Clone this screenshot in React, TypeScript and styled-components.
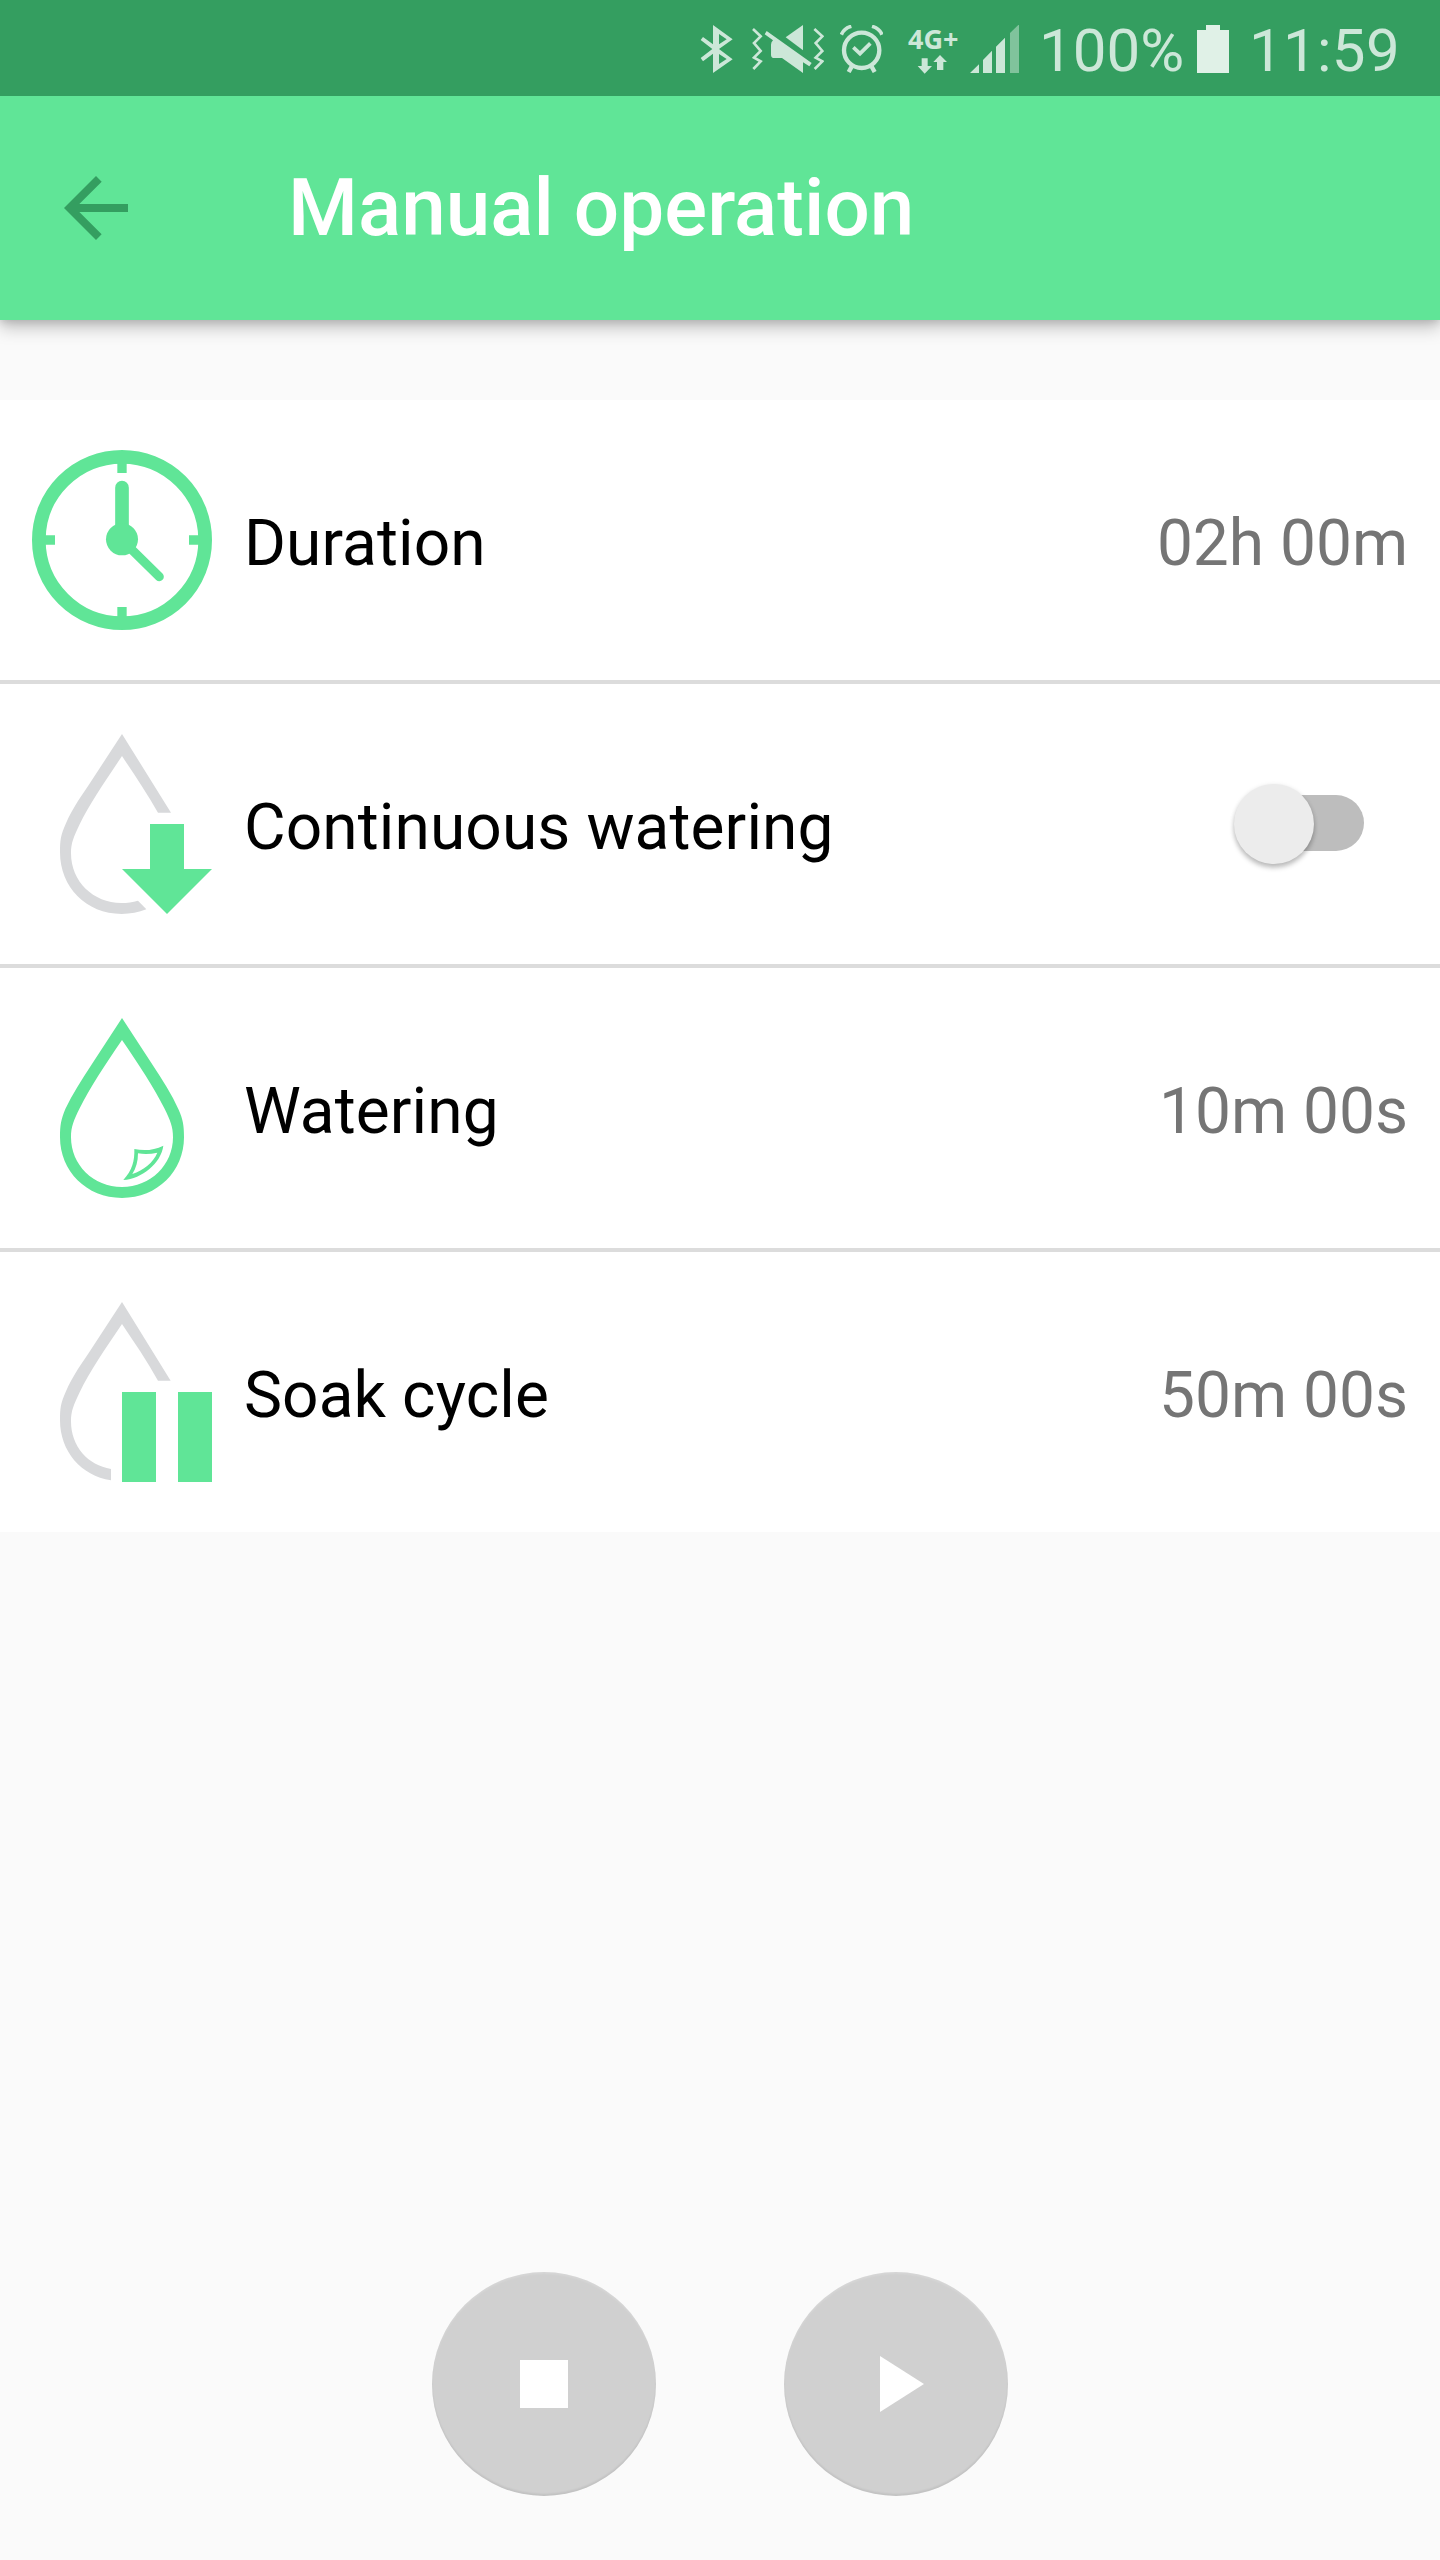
import React from "react";
import styled, { createGlobalStyle } from "styled-components";

const GREEN = "#60e597";
const DARK = "#349e60";
const PALE = "#cce7d8";
const GREY = "#d8d9db";

const GlobalStyle = createGlobalStyle`
  body { margin: 0; background: #fafafa; }
  * { box-sizing: border-box; }
  svg { display: block; flex: none; }
`;

const Screen = styled.div`
  width: 1440px;
  height: 2560px;
  display: flex;
  flex-direction: column;
  background: #fafafa;
  font-family: Roboto, sans-serif;
  overflow: hidden;
`;

const StatusBar = styled.div`
  height: 96px;
  flex: none;
  z-index: 1;
  display: flex;
  padding-left: 700px;
  background: ${DARK};
  color: ${PALE};
`;

const StatusIcon = styled.svg<{ $gap?: number }>`
  height: 48px;
  margin-top: 25px;
  margin-right: ${(p) => p.$gap ?? 0}px;
`;

const StatusText = styled.span<{ $width: number; $tracking?: number }>`
  width: ${(p) => p.$width}px;
  flex: none;
  font-size: 60px;
  line-height: 70px;
  letter-spacing: ${(p) => p.$tracking ?? 0}px;
  margin-top: 16px;
  white-space: nowrap;
`;

const Network = styled.div`
  width: 62px;
  flex: none;
  display: flex;
  flex-direction: column;
  padding-top: 25px;
`;

const NetworkLabel = styled.span`
  height: 30px;
  font: 700 27px/27px "Noto Sans", sans-serif;
  white-space: nowrap;
`;

const AppBar = styled.header`
  height: 224px;
  flex: none;
  display: flex;
  align-items: center;
  padding-left: 48px;
  background: ${GREEN};
  box-shadow: 0 8px 16px rgba(0, 0, 0, 0.22), 0 2px 8px rgba(0, 0, 0, 0.14);
`;

const Title = styled.h1`
  margin: 0 0 0 144px;
  font-size: 80px;
  line-height: 94px;
  letter-spacing: 0.05px;
  font-weight: 500;
  color: #fff;
  white-space: nowrap;
`;

const List = styled.main`
  margin-top: 80px;
  background: #fff;
`;

const Row = styled.div`
  height: 280px;
  display: flex;
  align-items: center;
  padding: 0 32px;

  & + & {
    height: 284px;
    border-top: 4px solid #dcdcdc;
  }
`;

const Label = styled.span`
  flex: 1;
  margin: 8px 0 0 32px;
  font-size: 64px;
  line-height: 76px;
  letter-spacing: 0.1px;
  color: #000;
`;

const Value = styled.span`
  margin-top: 8px;
  font-size: 64px;
  line-height: 76px;
  color: #757575;
`;

const Track = styled.div`
  width: 112px;
  height: 56px;
  margin: 0 44px 2px 0;
  display: flex;
  align-items: center;
  border-radius: 28px;
  background: #bdbdbd;
`;

const Thumb = styled.div`
  width: 80px;
  height: 80px;
  flex: none;
  margin: 2px 0 0 -18px;
  border-radius: 50%;
  background: #ececec;
  box-shadow: 0 4px 5px rgba(0, 0, 0, 0.22), 0 1px 5px rgba(0, 0, 0, 0.1);
`;

const Controls = styled.footer`
  margin-top: auto;
  padding-bottom: 64px;
  display: flex;
  justify-content: center;
  gap: 128px;
`;

const RoundButton = styled.button`
  width: 224px;
  height: 224px;
  padding: 0;
  border: 0;
  border-radius: 50%;
  background: #d0d0d0;
  box-shadow: inset 0 -2px 2px rgba(0, 0, 0, 0.07), inset 0 2px 2px rgba(255, 255, 255, 0.14);
`;

const ClockIcon = () => (
  <svg width="180" height="180" viewBox="0 0 540 540" fill="none" stroke={GREEN}>
    <circle cx="270" cy="270" r="249.5" strokeWidth="41" />
    <path d="M270 38V69M270 471V502M38 270H69M471 270H502" strokeWidth="28" />
    <path d="M270 270V113" strokeWidth="41" strokeLinecap="round" />
    <path d="M270 270L382 380" strokeWidth="27" strokeLinecap="round" />
    <circle cx="270" cy="268" r="48" fill={GREEN} stroke="none" />
  </svg>
);

const DropArrowIcon = () => (
  <svg width="180" height="180" viewBox="0 -3 540 540">
    <path
      fill={GREY}
      d="M270 -3L417 233H378C345 174 306 118 270 63C220 138 172 208 143 268C125 306 117 324 117 355C117 440 184 504 268 504C286 504 302 501 318 497L343 523C320 532 295 537 269 537C162 537 84 456 84 352C84 315 86 301 101 267C123 216 152 178 178 138Z"
    />
    <path fill={GREEN} d="M354 267H456V402H540L405 537L270 402H354Z" />
  </svg>
);

const DropIcon = () => (
  <svg width="180" height="180" viewBox="0 -3 540 540" fill={GREEN}>
    <path
      fillRule="evenodd"
      d="M270 -3L362 138C392 184 419 226 440 272C453 302 456 318 456 355C456 456 377 537 270 537C163 537 84 456 84 355C84 318 87 302 100 270C121 226 148 184 178 138ZM270 63C220 136 175 204 143 268C125 305 117 324 117 355C117 438 184 504 270 504C356 504 423 438 423 355C423 324 415 305 397 268C365 204 320 136 270 63Z"
    />
    <path
      fillRule="evenodd"
      d="M307 390C336 396 366 394 394 380C387 433 330 479 274 483C301 454 308 425 307 390ZM318 403C318 428 312 448 301 465C335 454 363 431 376 401C357 405 338 406 318 403Z"
    />
  </svg>
);

const DropPauseIcon = () => (
  <svg width="180" height="180" viewBox="0 0 540 540">
    <path
      fill={GREY}
      d="M270 0L416 236H378C345 176 306 120 270 66C220 140 172 210 143 271C125 309 117 327 117 358C117 434 168 490 237 501V535C147 522 84 447 84 355C84 318 86 304 101 270C123 219 152 181 178 141Z"
    />
    <path fill={GREEN} d="M270 270H372V540H270ZM438 270H540V540H438Z" />
  </svg>
);

const App = () => (
  <>
    <GlobalStyle />
    <Screen>
      <StatusBar>
        <StatusIcon $gap={18} width="34" viewBox="60 75 102 144" fill={PALE}>
          <path
            fillRule="evenodd"
            d="M99 75L158 118L117 147L158 178L99 219V161L69 184L62 174L97 147L62 120L69 111L99 133ZM117 102V133L140 118ZM117 162V192L140 177Z"
          />
        </StatusIcon>
        <StatusIcon $gap={16} width="72" viewBox="216 75 216 144" fill={PALE}>
          <path
            d="M219 87L242 109L222 129L242 153L222 173L242 184L220 207M403 87L427 109L407 129L427 153L407 173L427 184L404 207"
            fill="none"
            stroke={PALE}
            strokeWidth="8"
          />
          <path d="M369 75V151L317 112Z" />
          <path d="M260 93L395 189L388 199L369 187V219L306 174H283Q273 174 273 164V134Q273 126 279 121L254 103Z" />
        </StatusIcon>
        <StatusIcon $gap={25} width="43" viewBox="480 75 129 144" fill="none" stroke={PALE}>
          <circle cx="545" cy="151" r="53" strokeWidth="13" />
          <path d="M520 142L540 161L571 130" strokeWidth="11" />
          <path d="M484 104Q492 85 514 79M606 104Q598 85 576 79" strokeWidth="11" />
          <path d="M515 200L506 216M575 200L584 216" strokeWidth="13" />
        </StatusIcon>
        <Network>
          <NetworkLabel>4G+</NetworkLabel>
          <svg width="49" height="19" viewBox="684 165 147 57" fill={PALE}>
            <path d="M725 175H743V198H756L734 221L713 198H725ZM771 210H790V186H801L780 165L760 186H771Z" />
          </svg>
        </Network>
        <StatusIcon $gap={20} width="49" viewBox="870 75 147 144" fill={PALE}>
          <path d="M870 219L897 193V219ZM909 219V180L936 152V219ZM948 219V140L975 113V219Z" />
          <path d="M990 219V99L1017 73V219Z" opacity="0.5" />
        </StatusIcon>
        <StatusText $width={158}>100%</StatusText>
        <StatusIcon $gap={20} width="32" viewBox="0 0 32 48" fill="#e0f1e7">
          <path d="M0 5H9V0H23V5H32V48H0Z" />
        </StatusIcon>
        <StatusText $width={160} $tracking={0.3}>11:59</StatusText>
      </StatusBar>
      <AppBar>
        <svg width="96" height="96" viewBox="0 0 24 24" fill={DARK}>
          <path d="M20 11H7.83l5.59-5.59L12 4l-8 8 8 8 1.41-1.41L7.83 13H20z" />
        </svg>
        <Title>Manual operation</Title>
      </AppBar>
      <List>
        <Row>
          <ClockIcon />
          <Label>Duration</Label>
          <Value>02h 00m</Value>
        </Row>
        <Row>
          <DropArrowIcon />
          <Label>Continuous watering</Label>
          <Track role="switch" aria-checked={false}>
            <Thumb />
          </Track>
        </Row>
        <Row>
          <DropIcon />
          <Label>Watering</Label>
          <Value>10m 00s</Value>
        </Row>
        <Row>
          <DropPauseIcon />
          <Label>Soak cycle</Label>
          <Value>50m 00s</Value>
        </Row>
      </List>
      <Controls>
        <RoundButton>
          <svg width="224" height="224" viewBox="0 0 224 224" fill="#fff">
            <path d="M88 88H136V136H88Z" />
          </svg>
        </RoundButton>
        <RoundButton>
          <svg width="224" height="224" viewBox="0 0 224 224" fill="#fff">
            <path d="M96 84L140 112L96 140Z" />
          </svg>
        </RoundButton>
      </Controls>
    </Screen>
  </>
);

export default App;
